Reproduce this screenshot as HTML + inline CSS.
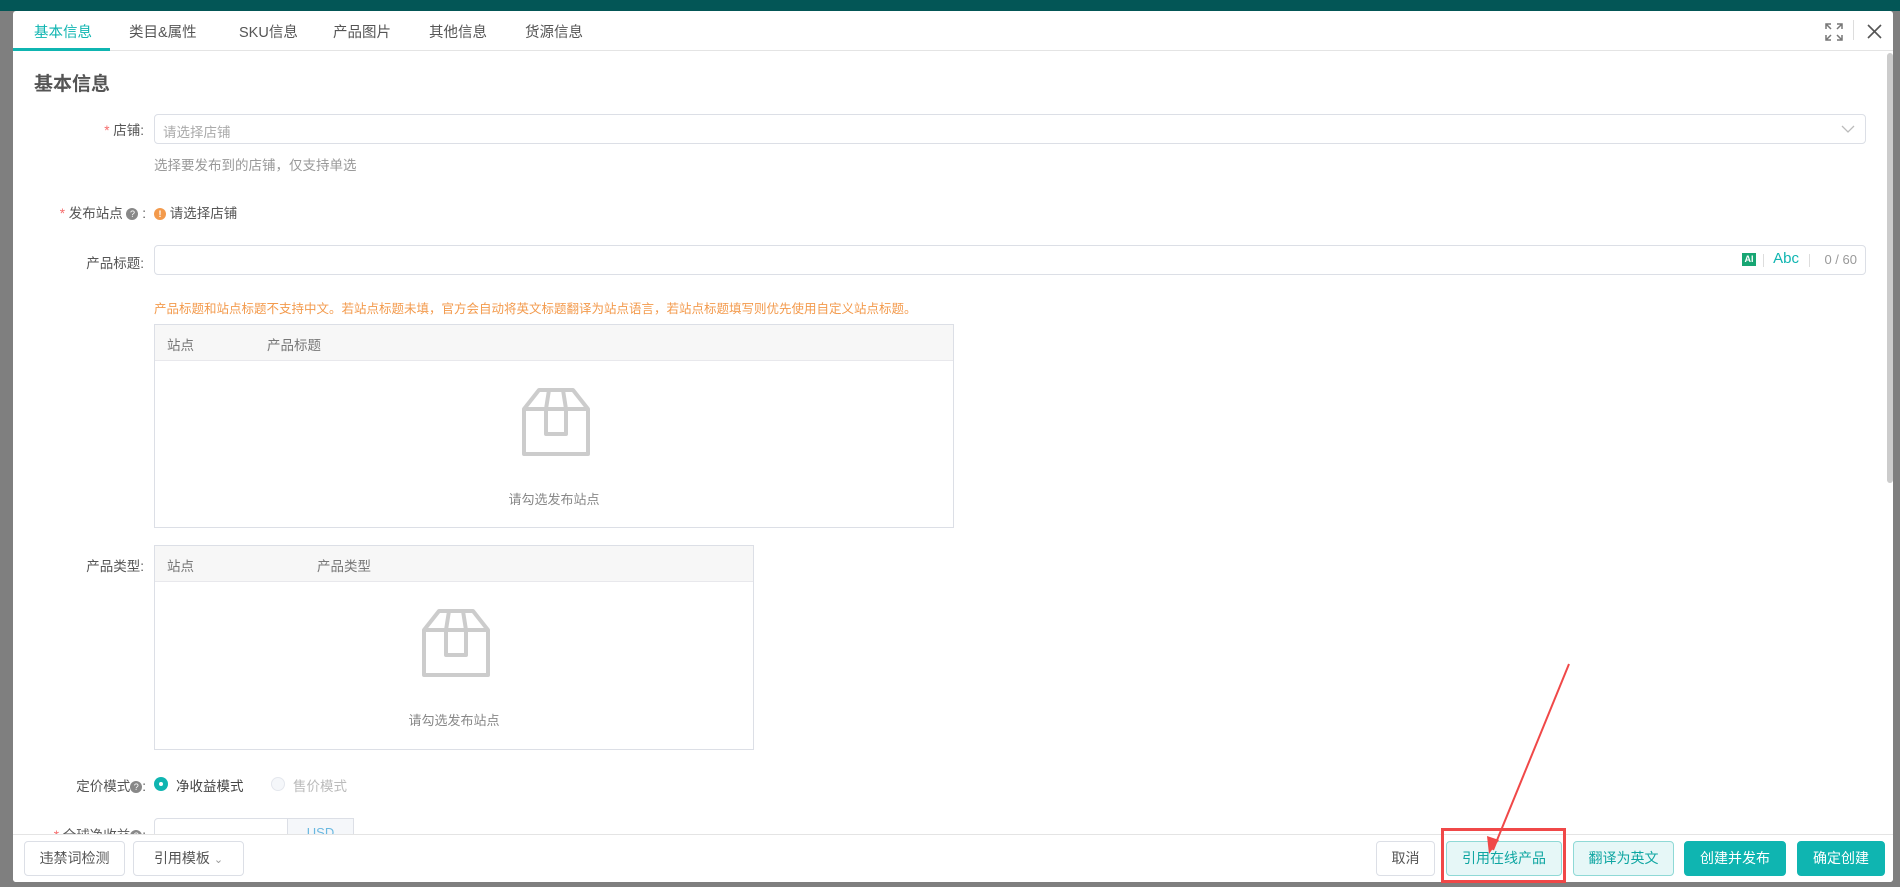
<!DOCTYPE html>
<html><head><meta charset="utf-8"><style>
*{box-sizing:border-box;margin:0;padding:0}
body{width:1900px;height:887px;overflow:hidden;background:#7f7f7f;font-family:"Liberation Sans","Noto Sans CJK SC",sans-serif;font-size:14px;color:#555;position:relative}
.abs{position:absolute}
.top{left:0;top:0;width:1900px;height:11px;background:#035656}
.modal{left:13px;top:11px;width:1880px;height:871px;background:#fff;border-radius:3px;overflow:hidden}
.tabs{left:0;top:0;width:1880px;height:40px;border-bottom:1px solid #e4e4e4}
.tab{position:absolute;top:10px;font-size:14.5px;color:#555}
.lbl{position:absolute;text-align:right;color:#555;font-size:13.5px}
.star{color:#f56c6c}
.inp{position:absolute;border:1px solid #dcdfe6;border-radius:4px;background:#fff}
.tbl{position:absolute;border:1px solid #dcdfe6}
.th{height:36px;background:#f7f7f7;border-bottom:1px solid #e8e8ec;position:relative;font-size:13.5px;color:#777}
.btn{position:absolute;top:830px;height:35px;border-radius:4px;font-size:14px;text-align:center;line-height:33px;border:1px solid #dcdfe6;color:#555;background:#fff}
.q{display:inline-block;width:12px;height:12px;border-radius:50%;background:#888;color:#fff;font-size:9px;line-height:12px;text-align:center;vertical-align:1px}
</style></head><body>
<div class="abs top"></div>
<div class="abs modal">
  <div class="abs tabs">
    <div class="tab" style="left:21px;color:#0fb5b1">基本信息</div>
    <div class="abs" style="left:0;top:37px;width:97px;height:3px;background:#0fb5b1"></div>
    <div class="tab" style="left:116px">类目&amp;属性</div>
    <div class="tab" style="left:226px">SKU信息</div>
    <div class="tab" style="left:320px">产品图片</div>
    <div class="tab" style="left:416px">其他信息</div>
    <div class="tab" style="left:512px">货源信息</div>
    <svg class="abs" style="left:1812px;top:12px" width="18" height="18" viewBox="0 0 18 18" fill="none" stroke="#777" stroke-width="1.5"><path d="M1 6V1h5M1 1l5 5M17 6V1h-5M17 1l-5 5M1 12v5h5M1 17l5-5M17 12v5h-5M17 17l-5-5"/></svg>
    <div class="abs" style="left:1840px;top:9px;width:1px;height:20px;background:#ddd"></div>
    <svg class="abs" style="left:1854px;top:13px" width="15" height="15" viewBox="0 0 15 15" stroke="#555" stroke-width="1.6"><path d="M1 1l13 13M14 1L1 14"/></svg>
  </div>
  <div class="abs" style="left:1874px;top:42px;width:6px;height:430px;background:#ccc;border-radius:3px"></div>
  <div class="abs" style="left:21px;top:58px;font-size:19px;font-weight:bold;color:#555">基本信息</div>

  <div class="lbl" style="left:40px;top:108px;width:91px"><span class="star">* </span>店铺:</div>
  <div class="inp" style="left:141px;top:103px;width:1712px;height:30px"><span class="abs" style="left:8px;top:6px;color:#aaa;font-size:13.5px">请选择店铺</span>
  <svg class="abs" style="right:10px;top:9px" width="14" height="10" viewBox="0 0 14 10" fill="none" stroke="#bbb" stroke-width="1.3"><path d="M1 2l6 6 6-6"/></svg></div>
  <div class="abs" style="left:141px;top:143px;color:#999;font-size:13.5px">选择要发布到的店铺，仅支持单选</div>

  <div class="lbl" style="left:0;top:191px;width:133px"><span class="star">* </span>发布站点 <span class="q">?</span> :</div>
  <div class="abs" style="left:141px;top:191px;font-size:13.5px;color:#555"><span style="display:inline-block;width:12px;height:12px;border-radius:50%;background:#f39a4c;color:#fff;font-size:9px;text-align:center;line-height:12px;font-weight:bold;vertical-align:1px">!</span> 请选择店铺</div>

  <div class="lbl" style="left:40px;top:241px;width:91px">产品标题:</div>
  <div class="inp" style="left:141px;top:234px;width:1712px;height:30px">
    <span class="abs" style="right:109px;top:7px;width:14px;height:13px;background:#17a673;color:#fff;font-size:9px;font-weight:bold;text-align:center;line-height:13px">AI</span>
    <span class="abs" style="right:101px;top:8px;width:1px;height:13px;background:#ddd"></span>
    <span class="abs" style="right:66px;top:4px;color:#0fb5b1;font-size:15px">Abc</span>
    <span class="abs" style="right:55px;top:8px;width:1px;height:13px;background:#ddd"></span>
    <span class="abs" style="right:8px;top:6px;color:#999;font-size:13px">0 / 60</span>
  </div>

  <div class="abs" style="left:141px;top:287px;color:#f39a4c;font-size:12.5px">产品标题和站点标题不支持中文。若站点标题未填，官方会自动将英文标题翻译为站点语言，若站点标题填写则优先使用自定义站点标题。</div>

  <div class="tbl" style="left:141px;top:313px;width:800px;height:204px">
    <div class="th"><span class="abs" style="left:12px;top:9px">站点</span><span class="abs" style="left:112px;top:9px">产品标题</span></div>
    <svg class="abs" style="left:366px;top:62px" width="70" height="70" viewBox="0 0 70 70" fill="none" stroke="#ccc" stroke-width="4" stroke-linejoin="round"><path d="M3 22L18 3H52L67 22V67H3Z M3 22H67 M28 3L25 22V47H45V22L42 3"/></svg>
    <div class="abs" style="left:0;width:100%;top:164px;text-align:center;color:#888;font-size:13px">请勾选发布站点</div>
  </div>

  <div class="lbl" style="left:40px;top:544px;width:91px">产品类型:</div>
  <div class="tbl" style="left:141px;top:534px;width:600px;height:205px">
    <div class="th"><span class="abs" style="left:12px;top:9px">站点</span><span class="abs" style="left:162px;top:9px">产品类型</span></div>
    <svg class="abs" style="left:266px;top:62px" width="70" height="70" viewBox="0 0 70 70" fill="none" stroke="#ccc" stroke-width="4" stroke-linejoin="round"><path d="M3 22L18 3H52L67 22V67H3Z M3 22H67 M28 3L25 22V47H45V22L42 3"/></svg>
    <div class="abs" style="left:0;width:100%;top:164px;text-align:center;color:#888;font-size:13px">请勾选发布站点</div>
  </div>

  <div class="lbl" style="left:0;top:764px;width:133px">定价模式<span class="q">?</span>:</div>
  <div class="abs" style="left:141px;top:766px;width:14px;height:14px;border-radius:50%;background:#0fb5b1"><div class="abs" style="left:5px;top:5px;width:4px;height:4px;border-radius:50%;background:#fff"></div></div>
  <div class="abs" style="left:163px;top:764px;font-size:13.5px;color:#444">净收益模式</div>
  <div class="abs" style="left:258px;top:766px;width:14px;height:14px;border-radius:50%;border:1px solid #e4e7ed;background:#f5f7fa"></div>
  <div class="abs" style="left:280px;top:764px;font-size:13.5px;color:#bbb">售价模式</div>

  <div class="lbl" style="left:0;top:813px;width:133px"><span class="star">* </span>全球净收益<span class="q">?</span>:</div>
  <div class="inp" style="left:141px;top:807px;width:200px;height:30px;border-radius:4px 0 0 4px"></div>
  <div class="abs" style="left:274px;top:807px;width:67px;height:30px;background:#f5f7fa;border:1px solid #dcdfe6;color:#6ab8e0;text-align:center;line-height:28px;font-size:13px">USD</div>

  <div class="abs" style="left:0;top:823px;width:1880px;height:48px;background:#fff;border-top:1px solid #e4e4e4"></div>
  <div class="btn" style="left:11px;width:101px">违禁词检测</div>
  <div class="btn" style="left:120px;width:111px">引用模板 <span style="color:#999;font-size:11px">&#8964;</span></div>
  <div class="btn" style="left:1363px;width:59px">取消</div>
  <div class="btn" style="left:1433px;width:116px;background:#e6f7f7;border-color:#8fd9d6;color:#0fa6a2">引用在线产品</div>
  <div class="btn" style="left:1560px;width:101px;background:#e6f7f7;border-color:#8fd9d6;color:#0fa6a2">翻译为英文</div>
  <div class="btn" style="left:1671px;width:102px;background:#0fb5b1;border-color:#0fb5b1;color:#fff">创建并发布</div>
  <div class="btn" style="left:1784px;width:88px;background:#0fb5b1;border-color:#0fb5b1;color:#fff">确定创建</div>
</div>
<div class="abs" style="left:1441px;top:828px;width:125px;height:55px;border:3px solid #f04848"></div>
<svg class="abs" style="left:0;top:0" width="1900" height="887"><line x1="1569" y1="664" x2="1493" y2="850" stroke="#f04848" stroke-width="2"/><path d="M1489 854L1487 836L1499 840Z" fill="#f04848"/></svg>
</body></html>
